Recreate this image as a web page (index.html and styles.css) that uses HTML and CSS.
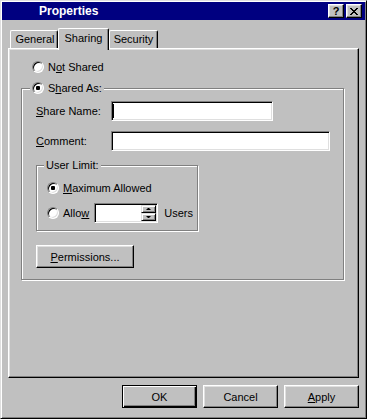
FILE: index.html
```html
<!DOCTYPE html>
<html lang="en">
<head>
  <meta charset="UTF-8" />
  <title>Properties</title>
  <link rel="stylesheet" href="styles.css">
</head>
<body>
  <div class="window">
    <div class="titlebar">
      <span class="title">Properties</span>
      <div class="title-buttons">
        <span class="title-btn">?</span>
        <span class="title-btn">
          <svg width="8" height="7" viewBox="0 0 8 7" shape-rendering="crispEdges"><path d="M0 0h2v1H0zM6 0h2v1H6zM1 1h2v1H1zM5 1h2v1H5zM2 2h4v1H2zM3 3h2v1H3zM2 4h4v1H2zM1 5h2v1H1zM5 5h2v1H5zM0 6h2v1H0zM6 6h2v1H6z" fill="#000"/></svg>
        </span>
      </div>
    </div>

    <div class="content">
      <div class="tabs">
        <div class="tab tab-general">General</div>
        <div class="tab tab-sharing active">Sharing</div>
        <div class="tab tab-security">Security</div>
      </div>

      <div class="panel">
        <label class="radio not-shared"><span class="radio-box"></span><span>N<u>o</u>t Shared</span></label>

        <div class="group share-group">
          <label class="group-label radio"><span class="radio-box checked"></span><span>S<u>h</u>ared As:</span></label>

          <div class="field-row">
            <span class="field-label"><u>S</u>hare Name:</span>
            <div class="edit share-name"><span class="caret"></span></div>
          </div>
          <div class="field-row">
            <span class="field-label"><u>C</u>omment:</span>
            <div class="edit comment"></div>
          </div>

          <div class="group limit-group">
            <span class="group-label">User Limit:</span>
            <label class="radio"><span class="radio-box checked"></span><span><u>M</u>aximum Allowed</span></label>
            <div class="allow-row">
              <label class="radio"><span class="radio-box"></span><span>Allo<u>w</u></span></label>
              <div class="edit spin">
                <div class="spin-buttons">
                  <span class="spin-btn up"></span>
                  <span class="spin-btn down"></span>
                </div>
              </div>
              <span class="users">Users</span>
            </div>
          </div>

          <button type="button" class="btn permissions"><u>P</u>ermissions...</button>
        </div>
      </div>

      <div class="buttons">
        <button type="button" class="btn default">OK</button>
        <button type="button" class="btn">Cancel</button>
        <button type="button" class="btn"><u>A</u>pply</button>
      </div>
    </div>
  </div>
</body>
</html>
```

FILE: styles.css
```css
body {
  margin: 0;
  font-family: "Liberation Sans", Arial, sans-serif;
  font-size: 11px;
  color: #000;
  background: #c0c0c0;
}
.window {
  box-sizing: border-box;
  width: 367px;
  height: 419px;
  padding: 1px;
  display: flex;
  flex-direction: column;
  background: #c0c0c0;
  border: 1px solid;
  border-color: #dfdfdf #000 #000 #dfdfdf;
  box-shadow: inset 1px 1px #fff, inset -1px -1px #808080;
}
.titlebar {
  height: 18px;
  display: flex;
  align-items: center;
  justify-content: space-between;
  padding: 0 3px 0 37px;
  background: #000080;
}
.title {
  color: #fff;
  font-size: 12px;
  font-weight: bold;
}
.title-buttons {
  display: flex;
  gap: 2px;
}
.title-btn {
  box-sizing: border-box;
  width: 16px;
  height: 14px;
  display: flex;
  align-items: center;
  justify-content: center;
  font-weight: bold;
  line-height: 12px;
  background: #c0c0c0;
  border: 1px solid;
  border-color: #fff #000 #000 #fff;
  box-shadow: inset -1px -1px #808080, inset 1px 1px #dfdfdf;
}
.content {
  flex: 1;
  display: flex;
  flex-direction: column;
  padding: 8px 6px 7px 6px;
}
.tabs {
  height: 20px;
  display: flex;
  align-items: flex-end;
  padding-left: 2px;
}
.tab {
  box-sizing: border-box;
  height: 18px;
  line-height: 16px;
  text-align: center;
  background: #c0c0c0;
  border: 1px solid;
  border-bottom: none;
  border-color: #fff #000 #000 #fff;
  border-radius: 2px 2px 0 0;
  box-shadow: inset -1px 0 #808080;
}
.tab-general { width: 48px; padding-left: 2px; }
.tab-sharing { width: 51px; }
.tab-security { width: 49px; }
.tab.active {
  height: 22px;
  margin-bottom: -2px;
  padding-top: 1px;
  position: relative;
  z-index: 1;
}
.panel {
  box-sizing: border-box;
  height: 330px;
  padding: 11px 14px 0 12px;
  border: 1px solid;
  border-color: #fff #000 #000 #fff;
  box-shadow: inset -1px -1px #808080, inset 1px 1px #dfdfdf;
}
.radio {
  display: flex;
  align-items: center;
  gap: 4px;
  height: 14px;
  line-height: 14px;
}
.radio-box {
  box-sizing: border-box;
  width: 12px;
  height: 12px;
  display: flex;
  align-items: center;
  justify-content: center;
  background: #fff;
  border: 1px solid;
  border-color: #808080 #fff #fff #808080;
  border-radius: 50%;
  box-shadow: inset 1px 1px #000, inset -1px -1px #dfdfdf;
}
.radio-box.checked::after {
  content: "";
  width: 4px;
  height: 4px;
  border-radius: 1px;
  background: #000;
}
.not-shared {
  margin-left: 11px;
}
.group {
  position: relative;
  box-sizing: border-box;
  border: 1px solid #808080;
  box-shadow: inset 1px 1px #fff, 1px 1px #fff;
}
.group-label {
  position: absolute;
  top: -8px;
  height: 14px;
  line-height: 14px;
  padding: 0 2px;
  background: #c0c0c0;
}
.share-group {
  margin-top: 14px;
  padding: 12px 0 11px 14px;
}
.share-group > .group-label { left: 8px; }
.limit-group > .group-label { left: 7px; }
.field-row {
  display: flex;
  align-items: center;
}
.field-row + .field-row {
  margin-top: 10px;
}
.field-label {
  width: 75px;
}
.edit {
  box-sizing: border-box;
  height: 20px;
  background: #fff;
  border: 1px solid;
  border-color: #808080 #fff #fff #808080;
  box-shadow: inset 1px 1px #000, inset -1px -1px #dfdfdf;
}
.share-name {
  width: 162px;
  display: flex;
  align-items: center;
  padding-left: 1px;
}
.caret {
  width: 1px;
  height: 14px;
  background: #000;
}
.comment {
  width: 219px;
}
.limit-group {
  width: 162px;
  margin-top: 14px;
  padding: 15px 0 7px 10px;
}
.allow-row {
  display: flex;
  align-items: center;
  margin-top: 8px;
}
.spin {
  width: 64px;
  margin-left: 5px;
  display: flex;
  justify-content: flex-end;
  padding: 1px;
}
.spin-buttons {
  width: 15px;
  display: flex;
  flex-direction: column;
}
.spin-btn {
  box-sizing: border-box;
  height: 8px;
  display: flex;
  align-items: center;
  justify-content: center;
  background: #c0c0c0;
  border: 1px solid;
  border-color: #dfdfdf #000 #000 #dfdfdf;
  box-shadow: inset 1px 1px #fff, inset -1px -1px #808080;
}
.spin-btn::after {
  content: "";
  width: 1px;
  border-left: 2px solid transparent;
  border-right: 2px solid transparent;
}
.spin-btn.up::after { border-bottom: 2px solid #000; }
.spin-btn.down::after { border-top: 2px solid #000; }
.users {
  margin-left: 6px;
}
.btn {
  box-sizing: border-box;
  height: 23px;
  padding: 0;
  font: inherit;
  color: #000;
  background: #c0c0c0;
  border: 1px solid;
  border-color: #fff #000 #000 #fff;
  box-shadow: inset -1px -1px #808080, inset 1px 1px #dfdfdf;
}
.btn.default {
  border-color: #000;
  box-shadow: inset 1px 1px #fff, inset -1px -1px #000, inset -2px -2px #808080;
}
.permissions {
  display: block;
  width: 98px;
  margin-top: 14px;
}
.buttons {
  display: flex;
  justify-content: flex-end;
  gap: 6px;
  margin-top: 7px;
}
.buttons .btn {
  width: 75px;
}
```
